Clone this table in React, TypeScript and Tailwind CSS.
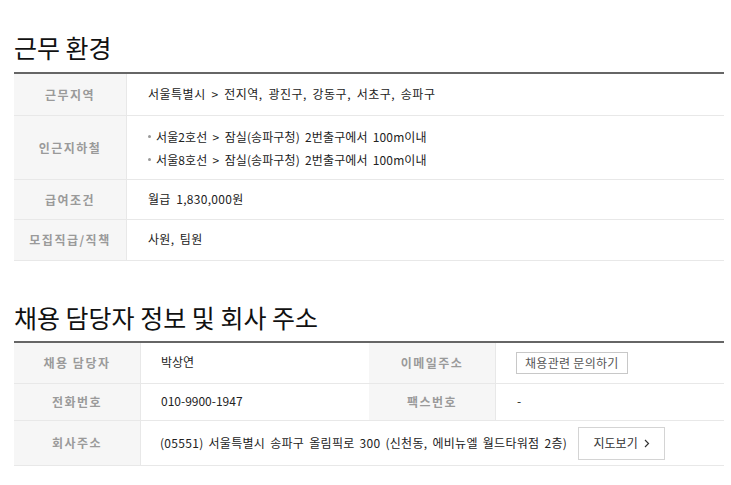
import React from "react";

const font = { fontFamily: '"Noto Sans CJK KR", "Noto Sans", sans-serif' };
const ws = { wordSpacing: "2.5px" };

function Label({ children, w }: { children: React.ReactNode; w: string }) {
  return (
    <div className={`${w} shrink-0 bg-[#f6f6f6] border-r border-[#e8e8e8] flex items-center justify-center text-[12px] text-[#9a9a9a] tracking-[1.5px] font-semibold`}>
      {children}
    </div>
  );
}

export default function App() {
  return (
    <div className="w-[731px] h-[485px] bg-white text-[#222]" style={font}>
      <div className="pl-[14px] pr-[7px] pt-[31px]">
        <h2 className="text-[25px] leading-[32px] text-[#111]">근무 환경</h2>
        <div className="mt-[9px] border-t-2 border-[#666]">
          <div className="flex h-[42px] border-b border-[#e8e8e8]">
            <Label w="w-[113px]">근무지역</Label>
            <div className="flex items-center pl-[21px] pb-[2px] text-[12px] tracking-[0.5px]" style={ws}>서울특별시 &gt; 전지역, 광진구, 강동구, 서초구, 송파구</div>
          </div>
          <div className="flex h-[64px] border-b border-[#e8e8e8]">
            <Label w="w-[113px]">인근지하철</Label>
            <div className="flex flex-col justify-center pl-[21px] text-[12px] leading-[23px] tracking-[0.1px]" style={ws}>
              <div className="flex items-center"><span className="inline-block w-[3px] h-[3px] rounded-full bg-[#999] mr-[5px]"></span>서울2호선 &gt; 잠실(송파구청) 2번출구에서 100m이내</div>
              <div className="flex items-center"><span className="inline-block w-[3px] h-[3px] rounded-full bg-[#999] mr-[5px]"></span>서울8호선 &gt; 잠실(송파구청) 2번출구에서 100m이내</div>
            </div>
          </div>
          <div className="flex h-[40px] border-b border-[#e8e8e8]">
            <Label w="w-[113px]">급여조건</Label>
            <div className="flex items-center pl-[21px] pb-[2px] text-[12px] tracking-[0.3px]" style={ws}>월급 1,830,000원</div>
          </div>
          <div className="flex h-[41px] border-b border-[#e8e8e8]">
            <Label w="w-[113px]">모집직급/직책</Label>
            <div className="flex items-center pl-[21px] pb-[2px] text-[12px] tracking-[0.3px]" style={ws}>사원, 팀원</div>
          </div>
        </div>

        <h2 className="mt-[40px] text-[25px] leading-[32px] text-[#111]">채용 담당자 정보 및 회사 주소</h2>
        <div className="mt-[8px] border-t-2 border-[#666]">
          <div className="flex h-[41px] border-b border-[#e8e8e8]">
            <Label w="w-[127px]">채용 담당자</Label>
            <div className="w-[228px] flex items-center pl-[20px] pb-[2px] text-[12px]">박상연</div>
            <Label w="w-[127px]">이메일주소</Label>
            <div className="flex items-center pl-[20px] text-[12px]">
              <span className="h-[22px] px-[8px] border border-[#c8c8c8] flex items-center text-[#555] tracking-[0.3px]">채용관련 문의하기</span>
            </div>
          </div>
          <div className="flex h-[37px] border-b border-[#e8e8e8]">
            <Label w="w-[127px]">전화번호</Label>
            <div className="w-[228px] flex items-center pl-[20px] pb-[2px] text-[12px]">010-9900-1947</div>
            <Label w="w-[127px]">팩스번호</Label>
            <div className="flex items-center pl-[21px] pb-[2px] text-[12px]">-</div>
          </div>
          <div className="flex h-[45px] border-b border-[#e8e8e8]">
            <Label w="w-[127px]">회사주소</Label>
            <div className="flex items-center pl-[19px] text-[12px] tracking-[0.3px]" style={{ wordSpacing: "2px" }}>
              (05551) 서울특별시 송파구 올림픽로 300 (신천동, 에비뉴엘 월드타워점 2층)
              <span className="ml-[11px] h-[33px] w-[87px] border border-[#d4d4d4] flex items-center justify-center text-[#333] gap-[6px] tracking-normal" style={{ wordSpacing: "0px" }}>
                지도보기
                <svg width="6" height="9" viewBox="0 0 6 9"><path d="M1 1 L4.5 4.5 L1 8" fill="none" stroke="#333" strokeWidth="1.2" /></svg>
              </span>
            </div>
          </div>
        </div>
      </div>
    </div>
  );
}
